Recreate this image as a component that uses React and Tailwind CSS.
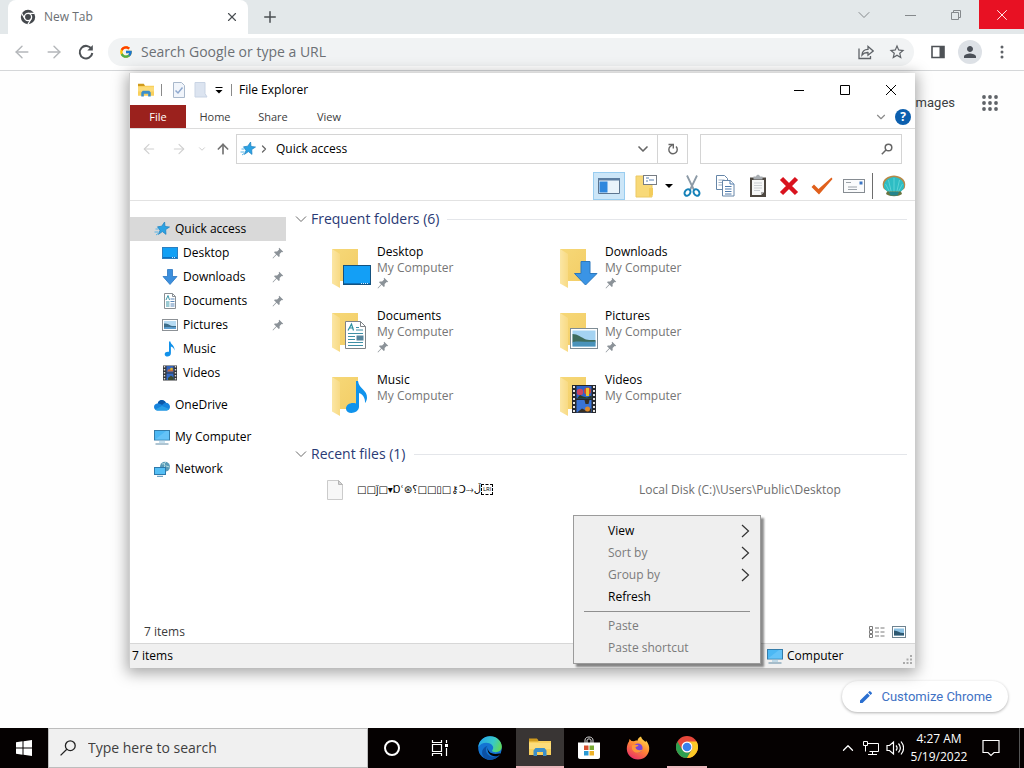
import { FcGoogle } from "react-icons/fc";
import { MdEdit, MdPerson, MdStarBorder } from "react-icons/md";
import { ChevronDown, ChevronRight, ChevronUp, ArrowLeft, ArrowRight, ArrowUp, Plus, X } from "lucide-react";

/* ---------- small icons ---------- */

function Pin({ className = "" }) {
  return (
    <svg viewBox="0 0 12 12" className={`size-3 ${className}`} fill="#8b9298">
      <path d="M7.2 0.8 11.2 4.8 10.3 5.3 9.6 4.9 7.6 6.9 7.7 9.2 6.8 10 4.6 7.8 1 11.4 0.6 11 4.1 7.3 2 5.2 2.8 4.4 5.1 4.5 7.1 2.5 6.7 1.6Z" />
    </svg>
  );
}

function QuickStar() {
  return (
    <svg viewBox="0 0 16 16" className="size-4 shrink-0">
      <path d="M10.6 1 11 5.400 15.500 6 11.700 8.600 12 13.400 8.400 10.600 4.400 13.400 6 9.400 3.500 5.800 7.700 5.200Z" fill="#2ba2e3" stroke="#1b7fc0" strokeWidth="0.7" />
      <path d="M1.500 8h3M0.500 11h4M2 14l2.500-1.800" stroke="#58b4e6" strokeWidth="1" />
    </svg>
  );
}

function DesktopIcon() {
  return (
    <svg viewBox="0 0 16 16" className="size-4 shrink-0">
      <rect x="0.5" y="2.5" width="15" height="11" fill="#12a0f5" stroke="#2d7fc0" />
      <path d="M1 12.5h14" stroke="#0b6fc0" />
      <path d="M10 12.5h4" stroke="#cfeaff" strokeDasharray="1 1" />
    </svg>
  );
}

function DownArrowIcon() {
  return (
    <svg viewBox="0 0 16 16" className="size-4 shrink-0">
      <path d="M5.5 0.5h5v7h4.5L8 15.5 1 7.5h4.5Z" fill="#3c8fdd" stroke="#2b76c0" strokeWidth="0.8" />
    </svg>
  );
}

function DocumentIcon() {
  return (
    <svg viewBox="0 0 16 16" className="size-4 shrink-0">
      <path d="M2.5 0.5h8l3 3v12h-11Z" fill="#fff" stroke="#8a8f94" />
      <path d="M10.500 0.5v3h3" fill="none" stroke="#8a8f94" />
      <path d="M4 7 6 2.500 7.500 7M4 9h3.500M4 11h3.500M4 13h3.500" stroke="#3b96a8" fill="none" />
      <path d="M8.500 6h4M8.500 8.500h4M8.500 11h4M8.500 13h4" stroke="#5b87b8" />
    </svg>
  );
}

function PictureIcon() {
  return (
    <svg viewBox="0 0 16 16" className="size-4 shrink-0">
      <rect x="0.5" y="2.5" width="15" height="11" fill="#fff" stroke="#8c9196" />
      <rect x="2" y="4" width="12" height="8" fill="#b6dbf3" />
      <path d="M2 6.500c3-.5 5 1 7 2.200 2 .6 3.500.3 5 .2V12H2Z" fill="#3d6e8b" />
      <path d="M2 10.500c4-1 8 0 12-.5V12H2Z" fill="#5e9fd0" />
    </svg>
  );
}

function MusicIcon() {
  return (
    <svg viewBox="0 0 16 16" className="size-4 shrink-0">
      <path d="M7 0.500h1.400c.3 3.200 4.600 4 4.100 9-.4-2.200-2-3.600-3.600-3.900v6.600c0 4.200-6.400 4.200-6.200.8.2-1.900 2.300-2.700 4.300-2.200Z" fill="#1191ea" />
    </svg>
  );
}

function VideoIcon() {
  return (
    <svg viewBox="0 0 16 16" className="size-4 shrink-0">
      <rect x="1" y="0.500" width="14" height="15" fill="#34373b" />
      <path d="M2.500 1v14M13.500 1v14" stroke="#dedede" strokeWidth="1.400" strokeDasharray="1.500 1.500" />
      <rect x="4.500" y="1" width="7" height="6.500" fill="#3264bd" />
      <rect x="4.500" y="8.500" width="7" height="6.500" fill="#356cc9" />
      <path d="M5 6.500 7 3.500 8 5l2-2.500 1.500 4Z" fill="#c76a37" />
      <path d="M6 13l3-2.500 2.500 2V15H6Z" fill="#3c4b2f" />
      <circle cx="9.500" cy="4" r="1.300" fill="#e1b62c" />
    </svg>
  );
}

function CloudIcon() {
  return (
    <svg viewBox="0 0 16 16" className="size-4 shrink-0">
      <path d="M3.700 6.500C4.500 2.500 9.800 1.700 11.900 5.800 14.300 5.800 16 7.500 16 9.800c0 2-1.400 3.600-3.200 3.600H3.200C1.300 13.400 0 11.800 0 10c0-2 1.600-3.500 3.700-3.500Z" fill="#1683dc" />
      <path d="M3.700 6.500C4.500 2.500 9.800 1.700 11.900 5.800 10.300 5.800 9 7 8 8 6.700 7 5.200 6.500 3.700 6.500Z" fill="#0b57a8" />
      <path d="M1 12.400 8 9l7.300 3c-.6.900-1.500 1.400-2.500 1.400H3.200c-.9 0-1.600-.400-2.200-1Z" fill="#289fe6" />
    </svg>
  );
}

function ComputerIcon() {
  return (
    <svg viewBox="0 0 16 16" className="size-4 shrink-0">
      <rect x="0.5" y="1.500" width="15" height="9.500" fill="#4cb8f4" stroke="#347ca9" />
      <path d="M1 10.500 12 2h3v8.500Z" fill="#64c3f8" />
      <path d="M5 13h6" stroke="#8fc1dd" />
      <path d="M1.500 15h13" stroke="#5e8aa5" />
    </svg>
  );
}

function NetworkIcon() {
  return (
    <svg viewBox="0 0 16 16" className="size-4 shrink-0">
      <circle cx="11" cy="5.800" r="5" fill="#5a9bb7" />
      <path d="M8 3c2 0 3-1 4-2M12 5l3.500 1M10 2l1 3-2 2" stroke="#b5dbe0" fill="none" />
      <rect x="0.5" y="6.500" width="11" height="7" fill="#55bff5" stroke="#2d79ab" />
      <path d="M3 15.300h6" stroke="#4d8db4" />
    </svg>
  );
}

function FolderApp({ className = "" }) {
  return (
    <svg viewBox="0 0 22 18" className={className}>
      <path d="M0 1h8l1.500 2H22v14H0Z" fill="#f9d05c" />
      <path d="M0 0.500h8l1.500 3H0Z" fill="#cf9a1d" />
      <path d="M0 5h22v6H0Z" fill="#fcdc7a" />
      <path d="M4.500 18v-5.500L6.500 10h9l2 2.500V18H14v-4H8v4Z" fill="#3b8fca" />
    </svg>
  );
}

/* Large folder with a badge for its kind in the lower right corner */
function BigFolder({ kind }) {
  return (
    <svg viewBox="0 0 40 44" className="h-11 w-10 shrink-0">
      <defs>
        <linearGradient id="folderBack" x1="0" y1="0" x2="1" y2="1">
          <stop offset="0" stopColor="#f6d878" />
          <stop offset="1" stopColor="#f3cd66" />
        </linearGradient>
        <linearGradient id="folderFlap" x1="0" y1="0" x2="1" y2="0">
          <stop offset="0" stopColor="#fbe6a4" />
          <stop offset="1" stopColor="#f8da84" />
        </linearGradient>
      </defs>
      <path d="M0 5h26v32H8Z" fill="url(#folderBack)" />
      <path d="M0 5 8 10v34L0 39.500Z" fill="url(#folderFlap)" />
      {kind === "Desktop" && (
        <g>
          <rect x="11.500" y="21.500" width="27" height="19" fill="#139ff6" stroke="#14527f" />
          <path d="M12 39.500h26" stroke="#0d6fb7" />
          <path d="M29 39.500h8" stroke="#d6efff" strokeDasharray="1 1" />
        </g>
      )}
      {kind === "Downloads" && (
        <path d="M21 17.500h9v12h7L25.500 41 14.500 29.500H21Z" fill="#3a94e5" stroke="#2c78bd" />
      )}
      {kind === "Documents" && (
        <g fill="none">
          <path d="M13.500 13.500h15l5 5v22h-20Z" fill="#fff" stroke="#7e8387" />
          <path d="M28.500 13.500v5h5" stroke="#7e8387" />
          <path d="M16 22.500 19.500 16l2 6.500M17.500 20h4" stroke="#2a8f9f" strokeWidth="1.200" />
          <path d="M24 19.500h3M24 22h7M16 25.500h15M16 28.500h7M16 31.500h7M16 34.500h15M16 37.500h15" stroke="#3f8fa5" />
          <path d="M24.500 27.500h7v5h-7Z" fill="#56859c" />
        </g>
      )}
      {kind === "Pictures" && (
        <g>
          <rect x="10.500" y="20.500" width="27" height="20" fill="#fff" stroke="#7e8c95" />
          <rect x="12.500" y="22.500" width="23" height="16" fill="#a4d3f2" />
          <path d="M12.500 26c5 0 9 3.500 13.500 5.500 4 .800 7 .500 9.500.5v2.500h-23Z" fill="#3e6c5c" />
          <path d="M12.500 34c8-1.500 15 .5 23-.5v5h-23Z" fill="#4a93bb" />
        </g>
      )}
      {kind === "Music" && (
        <path d="M24 9h2c1 8 9.500 9 9 17-.3 2.600-1 4-2 5 .5-5-2.500-9-6-10v14c-.5 7-12.500 8-13 2-.2-5 5.500-7 10-5.500Z" fill="#1093ec" />
      )}
      {kind === "Videos" && (
        <g>
          <rect x="12" y="13" width="24" height="28" fill="#26282c" />
          <path d="M14 14v26M34 14v26" stroke="#e4e4e4" strokeWidth="2" strokeDasharray="2 2" />
          <rect x="16.500" y="14" width="15" height="12.500" fill="#2d63ca" />
          <rect x="16.500" y="28" width="15" height="12.500" fill="#3a74d6" />
          <circle cx="20" cy="20" r="3.200" fill="#cc4662" />
          <circle cx="27.500" cy="19" r="3.500" fill="#d8452f" />
          <path d="M26 16h3v8h-3Z" fill="#eac22c" />
          <path d="M17 26.500 20 23l3 1.500 4 1 4.500-2v3Z" fill="#293d22" />
          <path d="M24.500 28h5l-1 4h-3ZM17 40.500l5-4 4 2 5-2v4Z" fill="#372f24" />
          <circle cx="27.500" cy="37" r="2.500" fill="#dd8a2b" />
        </g>
      )}
    </svg>
  );
}

/* ---------- browser ---------- */

function TabStrip() {
  return (
    <div className="flex h-[34px] bg-[#e3e8ea] text-[#4b4f53]">
      <div className="ml-2 flex w-60 items-center rounded-t-lg bg-white pr-[9px] pl-3">
        <svg viewBox="0 0 16 16" className="size-4">
          <circle cx="8" cy="8" r="7.200" fill="#44484d" />
          <circle cx="8" cy="8" r="3.600" fill="#44484d" stroke="#fff" strokeWidth="1.300" />
          <path d="M8 4.400h6.500M4.900 9.800 1.600 4.200M11.100 9.800 7.900 15.400" stroke="#fff" strokeWidth="1.200" />
        </svg>
        <span className="ml-2 flex-1 text-xs text-[#6b6f73]">New Tab</span>
        <button aria-label="Close tab">
          <X className="size-3.5" />
        </button>
      </div>
      <button aria-label="New tab" className="ml-[13px]">
        <Plus className="size-[18px]" />
      </button>
      <div className="flex-1" />
      <div className="flex h-[29px] items-center text-[#85898c]">
        <button aria-label="Search tabs" className="flex w-[46px] justify-center">
          <ChevronDown className="size-5" strokeWidth={1.2} />
        </button>
        <button aria-label="Minimize" className="flex w-[46px] justify-center">
          <svg viewBox="0 0 12 12" className="size-3" stroke="currentColor">
            <path d="M1 6.500h11" />
          </svg>
        </button>
        <button aria-label="Restore" className="flex w-[46px] justify-center">
          <svg viewBox="0 0 12 12" className="size-3" stroke="currentColor" fill="none">
            <path d="M1.500 3.500h7v7h-7ZM3.500 3.500v-2h7v7h-2" />
          </svg>
        </button>
        <button aria-label="Close" className="flex h-full w-[45px] items-center justify-center bg-[#e81123] text-white">
          <X className="size-[18px]" strokeWidth={1.2} />
        </button>
      </div>
    </div>
  );
}

function BrowserToolbar() {
  return (
    <div className="flex h-[37px] items-center border-b border-[#d5d7d9] bg-white pr-3.5 pl-3 text-[#5f6368]">
      <button aria-label="Back" className="text-[#b4b7ba]">
        <ArrowLeft className="size-5" strokeWidth={1.7} />
      </button>
      <button aria-label="Forward" className="ml-3 text-[#b4b7ba]">
        <ArrowRight className="size-5" strokeWidth={1.7} />
      </button>
      <button aria-label="Reload" className="ml-3">
        <svg viewBox="0 0 20 20" className="size-5" fill="none" stroke="#4e5256" strokeWidth="2">
          <path d="M15.600 7.200A6.300 6.300 0 1 0 16.300 11" />
          <path d="M16.800 3v5.500h-5.500Z" fill="#4e5256" stroke="none" />
        </svg>
      </button>
      <div className="ml-3 flex h-7 flex-1 items-center rounded-full bg-[#f1f3f4] pr-2 pl-[11px]">
        <FcGoogle className="size-3.5" />
        <input
          aria-label="Address and search bar"
          placeholder="Search Google or type a URL"
          className="ml-2 min-w-0 flex-1 bg-transparent text-sm outline-none placeholder:text-[#6c7074]"
        />
        <button aria-label="Share">
          <svg viewBox="0 0 16 16" className="size-4" fill="none" stroke="#5f6368" strokeWidth="1.300">
            <path d="M1 4.500v10h11.500v-2.500" />
            <path d="M4 11c.2-3.500 2.300-5.500 6-5.600V2.500L15.200 7 10 11.200V8.500C7.500 8.400 5.500 9 4 11Z" />
          </svg>
        </button>
        <button aria-label="Bookmark" className="ml-3.5">
          <MdStarBorder className="size-[18px]" />
        </button>
      </div>
      <button aria-label="Side panel" className="ml-4">
        <svg viewBox="0 0 16 16" className="size-4">
          <path d="M2 2.500h12v11H2Z" fill="none" stroke="#4e5256" strokeWidth="1.600" />
          <path d="M9.500 2H14v12H9.500Z" fill="#4e5256" />
        </svg>
      </button>
      <button aria-label="Profile" className="ml-3 flex size-6 items-center justify-center rounded-full bg-[#dde1e6]">
        <MdPerson className="size-[18px] text-[#4b5058]" />
      </button>
      <button aria-label="Menu" className="ml-3 flex w-4 justify-center">
        <svg viewBox="0 0 4 16" className="h-4 w-1" fill="#5f6368">
          <circle cx="2" cy="3" r="1.500" />
          <circle cx="2" cy="8" r="1.500" />
          <circle cx="2" cy="13" r="1.500" />
        </svg>
      </button>
    </div>
  );
}

function BrowserPage() {
  return (
    <main className="flex flex-1 flex-col items-end justify-between bg-[#fefefe] font-[Roboto,sans-serif]">
      <div className="flex h-16 items-center pr-[26px]">
        <a href="#images" className="text-[13px] text-[#3c3f43]">Images</a>
        <button aria-label="Google apps" className="ml-[27px]">
          <svg viewBox="0 0 16 16" className="size-4" fill="#5f6368">
            {[2, 8, 14].map((y) => [2, 8, 14].map((x) => <circle key={`${x}-${y}`} cx={x} cy={y} r="1.900" />))}
          </svg>
        </button>
      </div>
      <button className="mr-4 mb-4 flex h-[31px] items-center rounded-full bg-white px-4 text-[13px] text-[#3f72c4] shadow-[0_1px_3px_0_rgba(0,0,0,0.3)]">
        <MdEdit className="mr-[7px] size-4 text-[#2a6fd0]" />
        Customize Chrome
      </button>
    </main>
  );
}

/* ---------- file explorer ---------- */

const folders = [
  { name: "Desktop", pinned: true },
  { name: "Downloads", pinned: true },
  { name: "Documents", pinned: true },
  { name: "Pictures", pinned: true },
  { name: "Music", pinned: false },
  { name: "Videos", pinned: false },
];

const folderIcons = {
  Desktop: DesktopIcon,
  Downloads: DownArrowIcon,
  Documents: DocumentIcon,
  Pictures: PictureIcon,
  Music: MusicIcon,
  Videos: VideoIcon,
};

function TitleBar() {
  return (
    <div className="flex h-8 items-center pt-0.5 pr-px pl-2 text-xs text-black">
      <FolderApp className="h-3.5 w-4" />
      <span className="ml-[7px] h-3 w-px bg-[#8a8a8a]" />
      <button aria-label="Properties" className="ml-2.5">
        <svg viewBox="0 0 14 16" className="h-4 w-3.5" fill="#f1f5fb" stroke="#a9b8cb">
          <path d="M1.500 0.500h8l3 3v12h-11Z" />
          <path d="m3.500 8.500 2.500 2.500 4.500-5.500" stroke="#8fa9cf" strokeWidth="1.500" fill="none" />
        </svg>
      </button>
      <button aria-label="New folder" className="ml-2">
        <svg viewBox="0 0 14 16" className="h-4 w-3.5">
          <path d="M1 0.500h10v11l2 3.500H1Z" fill="#dce4f0" stroke="#c9d4e4" />
        </svg>
      </button>
      <button aria-label="Customize toolbar" className="ml-[7px]">
        <svg viewBox="0 0 8 8" className="size-2">
          <path d="M0.500 1.500h7" stroke="#000" />
          <path d="M0.500 4h7L4 7.500Z" />
        </svg>
      </button>
      <span className="ml-2 h-3 w-px bg-[#8a8a8a]" />
      <h1 className="ml-[7px] flex-1">File Explorer</h1>
      <button aria-label="Minimize" className="flex w-[46px] justify-center">
        <svg viewBox="0 0 12 12" className="size-3" stroke="#000">
          <path d="M1 6.500h10" />
        </svg>
      </button>
      <button aria-label="Maximize" className="flex w-[46px] justify-center">
        <svg viewBox="0 0 12 12" className="size-3" stroke="#000" fill="none">
          <path d="M1.500 1.500h9v9h-9Z" />
        </svg>
      </button>
      <button aria-label="Close" className="flex w-[46px] justify-center">
        <svg viewBox="0 0 12 12" className="size-3" stroke="#000">
          <path d="m1 1 10 10M11 1 1 11" />
        </svg>
      </button>
    </div>
  );
}

function RibbonTabs() {
  return (
    <div className="flex h-6 items-center border-b border-[#dcdcdc] text-[11px] text-[#3c3c3c]">
      <button className="h-full w-14 bg-[#9b211d] pt-px text-white">File</button>
      <button className="w-[58px] pt-px">Home</button>
      <button className="w-[58px] pt-px">Share</button>
      <button className="w-[54px] pt-px">View</button>
      <div className="flex-1" />
      <ChevronDown className="size-3.5 text-[#8b8b8b]" />
      <button aria-label="Help" className="mr-1 ml-[7px] flex size-4 items-center justify-center rounded-full bg-[#0c5fae] text-xs font-bold text-white">
        ?
      </button>
    </div>
  );
}

function AddressRow() {
  return (
    <div className="flex items-center pt-[5px] pr-[13px] pl-[11px] text-xs text-black">
      <button aria-label="Back" className="text-[#d0d0d0]">
        <ArrowLeft className="size-4" strokeWidth={1.7} />
      </button>
      <button aria-label="Forward" className="ml-3.5 text-[#d0d0d0]">
        <ArrowRight className="size-4" strokeWidth={1.7} />
      </button>
      <button aria-label="Recent locations" className="ml-2.5 text-[#c4c4c4]">
        <ChevronDown className="size-2.5" />
      </button>
      <button aria-label="Up" className="ml-2 text-[#737373]">
        <ArrowUp className="size-4" strokeWidth={2.5} />
      </button>
      <div className="ml-[5px] flex h-[30px] flex-1 items-center border border-[#d4d4d4] bg-white">
        <div className="flex flex-1 items-center pl-[3px]">
          <QuickStar />
          <ChevronRight className="ml-0.5 size-3 text-[#666]" strokeWidth={2.5} />
          <span className="ml-1.5">Quick access</span>
        </div>
        <button aria-label="Previous locations" className="flex w-7 justify-center">
          <ChevronDown className="size-4 text-[#666]" strokeWidth={2.5} />
        </button>
        <button aria-label="Refresh" className="flex h-full w-[30px] items-center justify-center border-l border-[#d4d4d4]">
          <svg viewBox="0 0 12 12" className="size-3" fill="none" stroke="#666" strokeWidth="1.400">
            <path d="M9 3.600A4.200 4.200 0 1 1 3.200 3.500L5.800 1.500" />
            <path d="M1.500 1.500h4.800v4" />
          </svg>
        </button>
      </div>
      <div className="ml-3 flex h-[30px] w-[202px] items-center border border-[#d4d4d4] bg-white pr-2">
        <input aria-label="Search Quick access" className="min-w-0 flex-1 bg-transparent px-2 outline-none" />
        <svg viewBox="0 0 12 12" className="size-3" fill="none" stroke="#666" strokeWidth="1.500">
          <circle cx="7.500" cy="4.500" r="3.300" />
          <path d="M5.200 6.800 0.800 11.200" />
        </svg>
      </div>
    </div>
  );
}

function CommandBar() {
  return (
    <div className="mt-1.5 flex h-[31px] items-center justify-end border-b border-[#e2e2e2] pt-px pr-2">
      <button aria-label="Navigation pane" className="flex h-7 w-8 items-center justify-center border border-[#99cdf0] bg-[#cce6f8]">
        <svg viewBox="0 0 22 18" className="h-[18px] w-[22px]">
          <path d="M0.500 1.500h21v15h-21Z" fill="#e9f3fb" stroke="#5c7590" />
          <path d="M0 1h22v2.500H0Z" fill="#5c7da0" />
          <path d="M1.500 4.500h8v11h-8Z" fill="#2f87dd" />
        </svg>
      </button>
      <button aria-label="New item" className="ml-2.5">
        <svg viewBox="0 0 22 24" className="h-6 w-[22px]">
          <path d="M1 2h12l4 4v17H1Z" fill="#f8d978" stroke="#ecc964" />
          <path d="M14 14h4v7l-4 2Z" fill="#f3cc5b" />
          <rect x="8.500" y="1.500" width="13" height="9" fill="#fff" stroke="#777d84" />
          <path d="M11 7h2M14 6h5M11 4h3" stroke="#5980b0" />
        </svg>
      </button>
      <button aria-label="New item options" className="ml-2">
        <svg viewBox="0 0 8 4" className="h-1 w-2">
          <path d="M0 0h8L4 4Z" />
        </svg>
      </button>
      <button aria-label="Cut" className="ml-2.5">
        <svg viewBox="0 0 18 24" className="h-6 w-[18px]" fill="none">
          <path d="M4 1.500 11 16M14 1.500 7 16" stroke="#8c9aa6" strokeWidth="1.800" />
          <ellipse cx="4.500" cy="18.500" rx="2.700" ry="3.500" transform="rotate(35 4.500 18.500)" stroke="#1581b8" strokeWidth="2" />
          <ellipse cx="13.500" cy="18.500" rx="2.700" ry="3.500" transform="rotate(-35 13.500 18.500)" stroke="#1581b8" strokeWidth="2" />
        </svg>
      </button>
      <button aria-label="Copy" className="ml-3.5">
        <svg viewBox="0 0 20 24" className="h-6 w-5" stroke="#6686a8" fill="#fff">
          <path d="M1.500 1.500h8l3 3v11h-11Z" />
          <path d="M3.500 6h6M3.500 8.500h6M3.500 11h6" stroke="#9eb2c7" />
          <path d="M7.500 6.500h8l3.500 3.500v12H7.500Z" />
          <path d="M15 6.500V10h4M10 12.500h6.500M10 15h6.500M10 17.500h6.500M10 20h6.500" stroke="#4f7bac" />
        </svg>
      </button>
      <button aria-label="Paste" className="ml-3.5">
        <svg viewBox="0 0 18 24" className="h-6 w-[18px]">
          <path d="M1 3.500h16V23H1Z" fill="#4d4740" />
          <path d="M3 6h12v12l-3 3H3Z" fill="#f6f7f7" />
          <path d="M12 21v-3h3Z" fill="#aaa" />
          <path d="M4.500 2.500H7C7.500 0 10.500 0 11 2.500h2.500v3h-9Z" fill="#a8adb2" />
          <path d="M5 9h8M5 11.500h8M5 14h8M5 16.500h6" stroke="#c9cdd1" />
        </svg>
      </button>
      <button aria-label="Delete" className="ml-3">
        <svg viewBox="0 0 20 20" className="size-5" stroke="#d9131e" strokeWidth="4.500">
          <path d="m2.500 2.500 15 15M17.500 2.500l-15 15" />
        </svg>
      </button>
      <button aria-label="Rename" className="ml-3">
        <svg viewBox="0 0 22 20" className="h-5 w-[22px]">
          <path d="M0.500 11 3 8.500l4.500 4.500L20.500 1.500 21.500 3 8 18.500Z" fill="#e0601c" />
        </svg>
      </button>
      <button aria-label="Properties" className="ml-2.5">
        <svg viewBox="0 0 22 14" className="h-3.5 w-[22px]">
          <rect x="0.500" y="0.500" width="21" height="13" fill="#fafbfc" stroke="#868c92" />
          <path d="M3 3.500h5M5 8h9M5 10.500h9" stroke="#9ba2a9" />
          <path d="M16.500 2.500h3v3h-3Z" fill="#3b75c4" />
        </svg>
      </button>
      <span className="ml-[7px] h-[26px] w-px bg-[#6d6d6d]" />
      <button aria-label="Classic shell" className="ml-2">
        <svg viewBox="0 0 26 24" className="h-6 w-[26px]">
          <path d="M2 13C0 5 8 1.500 13 1.500S26 5 24 13c-.5 3-4 3-5 5H7c-1-2-4.500-2-5-5Z" fill="#b58a4a" />
          <path d="M3 13C2 6.500 9 3 13 3s11 3.500 10 10c-.5 3-3 4-4 5.500H7.500C6.500 17 3.500 16 3 13Z" fill="#2ebdc4" />
          <path d="M13 19V4M10.500 19 7.500 6M15.500 19l3-13M9 18.500 4.500 10M17 18.500 21.500 10" stroke="#5dd3d5" fill="none" />
          <path d="M6 17.500h14l1 2.500c-4 3-12 3-16 0Z" fill="#6b7440" />
          <path d="M8 18h10l-1.500 3.500h-7Z" fill="#24858d" />
        </svg>
      </button>
    </div>
  );
}

function SidebarItem({ icon: Icon, label, pinned, nested, active }) {
  return (
    <li>
      <a
        href={`#${label}`}
        className={`flex h-6 items-center pr-0.5 ${nested ? "pl-8" : "pl-6"} ${active ? "bg-[#d9d9d9]" : ""}`}
      >
        <Icon />
        <span className="ml-[5px] flex-1">{label}</span>
        {pinned && <Pin />}
      </a>
    </li>
  );
}

function Sidebar() {
  return (
    <nav className="w-[156px] shrink-0 pt-4 text-xs text-black">
      <ul>
        <SidebarItem icon={QuickStar} label="Quick access" active />
        {folders.map((f) => (
          <SidebarItem key={f.name} icon={folderIcons[f.name]} label={f.name} pinned={f.pinned} nested />
        ))}
      </ul>
      <ul className="mt-2 flex flex-col gap-2">
        <SidebarItem icon={CloudIcon} label="OneDrive" />
        <SidebarItem icon={ComputerIcon} label="My Computer" />
        <SidebarItem icon={NetworkIcon} label="Network" />
      </ul>
    </nav>
  );
}

function GroupHeader({ children }) {
  return (
    <div className="flex h-6 items-center gap-1 text-[#2a3a75]">
      <svg viewBox="0 0 12 8" className="h-2 w-3" fill="none" stroke="#6a6a6a">
        <path d="M1 1.500 6 6.500l5-5" />
      </svg>
      <h2 className="text-sm">{children}</h2>
      <span className="ml-1 h-px flex-1 bg-[#e4e6ea]" />
    </div>
  );
}

function Content() {
  return (
    <section className="min-w-0 flex-1 pt-1.5 pr-2 pl-[9px] text-xs">
      <GroupHeader>Frequent folders (6)</GroupHeader>
      <ul className="mt-[13px] grid grid-cols-[228px_228px] pl-[37px]">
        {folders.map((f) => (
          <li key={f.name} className="flex h-16 gap-[5px]">
            <BigFolder kind={f.name} />
            <div className="leading-4">
              <p className="text-black">{f.name}</p>
              <p className="text-[#767676]">My Computer</p>
              {f.pinned && <Pin className="mt-px" />}
            </div>
          </li>
        ))}
      </ul>
      <div className="mt-1.5">
        <GroupHeader>Recent files (1)</GroupHeader>
      </div>
      <div className="mt-3 flex h-6 items-center pl-8">
        <svg viewBox="0 0 16 20" className="h-[22px] w-4 shrink-0">
          <path d="M0.500 0.500h11l4 4v15h-15Z" fill="#f7f7f7" stroke="#cbcbcb" />
          <path d="M11.500 0.500v4h4Z" fill="#d5d5d5" stroke="#b5b5b5" />
        </svg>
        <span className="ml-3.5 flex w-[282px] items-center text-[10px] text-black">
          □□ǰ□▾Ɒՙ⊛⸮□□▯□⚷Ↄ⤑ڵ
          <span className="border border-dashed border-black px-px text-[6px] leading-[9px]">LRI</span>
        </span>
        <span className="text-[#6e6e6e]">Local Disk (C:)\Users\Public\Desktop</span>
      </div>
    </section>
  );
}

function StatusBars() {
  return (
    <footer className="text-xs">
      <div className="flex h-6 items-center pt-px pr-[9px] pl-3.5 text-[#3b3b3b]">
        <span className="flex-1">7 items</span>
        <button aria-label="Details view">
          <svg viewBox="0 0 16 14" className="h-3.5 w-4" fill="none" stroke="#7b7b7b">
            <path d="M0.500 1.500h3v3h-3ZM0.500 5.500h3v3h-3ZM0.500 9.500h3v3h-3Z" />
            <path d="M6 3h10M6 7h10M6 11h10" strokeDasharray="4 1.500" />
          </svg>
        </button>
        <button aria-label="Large icons view" className="ml-[7px]">
          <svg viewBox="0 0 14 12" className="h-3 w-3.5">
            <rect x="0.500" y="0.500" width="13" height="11" fill="#fff" stroke="#6f8390" />
            <rect x="2" y="2.500" width="10" height="7" fill="#8cc2e4" />
            <path d="M2 4.500c4 0 6 3 10 2.500v2.500H2Z" fill="#2e5870" />
          </svg>
        </button>
      </div>
      <div className="flex h-[25px] items-center border-t border-[#d7d7d7] bg-[#f0f0f0] pl-0.5 text-black">
        <span className="flex-1">7 items</span>
        <ComputerIcon />
        <span className="ml-1 w-[116px]">Computer</span>
        <svg viewBox="0 0 10 10" className="mt-2 mr-0.5 size-2.5" fill="#aaa">
          <path d="M7 0h2v2H7ZM7 3.500h2v2H7ZM3.500 3.500h2v2h-2ZM7 7h2v2H7ZM3.500 7h2v2h-2ZM0 7h2v2H0Z" />
        </svg>
      </div>
    </footer>
  );
}

function MenuItem({ label, disabled, submenu }) {
  return (
    <button
      role="menuitem"
      disabled={disabled}
      className={`flex h-[22px] w-full items-center justify-between pr-1.5 pl-[34px] ${disabled ? "text-[#7b7b7b]" : "text-black"}`}
    >
      {label}
      {submenu && (
        <svg viewBox="0 0 16 16" className="size-4" fill="none" stroke="#333" strokeWidth="1.200">
          <path d="m4 2 6.500 6L4 14" />
        </svg>
      )}
    </button>
  );
}

function ContextMenu() {
  return (
    <div
      role="menu"
      className="absolute top-[442px] left-[443px] w-[188px] border border-[#9b9b9b] bg-[#efefef] py-1 text-xs shadow-[3px_3px_2px_rgba(0,0,0,0.45)]"
    >
      <MenuItem label="View" submenu />
      <MenuItem label="Sort by" disabled submenu />
      <MenuItem label="Group by" disabled submenu />
      <MenuItem label="Refresh" />
      <hr className="mx-2.5 my-[3px] border-[#8f8f8f]" />
      <MenuItem label="Paste" disabled />
      <MenuItem label="Paste shortcut" disabled />
    </div>
  );
}

function FileExplorer() {
  return (
    <div className="absolute top-[73px] right-[109px] bottom-[100px] left-[129px] flex flex-col border-l border-[#cfcfcf] bg-white shadow-[0_3px_14px_2px_rgba(0,0,0,0.35)]">
      <TitleBar />
      <RibbonTabs />
      <AddressRow />
      <CommandBar />
      <div className="flex min-h-0 flex-1">
        <Sidebar />
        <Content />
      </div>
      <StatusBars />
      <ContextMenu />
    </div>
  );
}

/* ---------- taskbar ---------- */

function Taskbar() {
  return (
    <div className="flex h-10 shrink-0 items-stretch bg-[#050101] text-white">
      <button aria-label="Start" className="flex w-12 items-center justify-center">
        <svg viewBox="0 0 16 16" className="size-4" fill="#fff">
          <path d="M0 2.200 6.500 1.300v6.200H0ZM7.500 1.200 16 0v7.500H7.500ZM0 8.500h6.500v6.200L0 13.800ZM7.500 8.500H16V16l-8.500-1.200Z" />
        </svg>
      </button>
      <div className="flex w-80 items-center border border-[#bdbdbd] bg-[#f0f0f0] pl-[11px] text-[#3b3b3b]">
        <svg viewBox="0 0 16 16" className="size-4" fill="none" stroke="#222" strokeWidth="1.300">
          <circle cx="10.300" cy="5.700" r="4.900" />
          <path d="M6.800 9.200 0.600 15.400" />
        </svg>
        <input
          aria-label="Search"
          placeholder="Type here to search"
          className="ml-3 min-w-0 flex-1 bg-transparent text-sm outline-none placeholder:text-[#3f3f3f]"
        />
      </div>
      <button aria-label="Cortana" className="flex w-12 items-center justify-center">
        <span className="size-4 rounded-full border-2 border-white" />
      </button>
      <button aria-label="Task view" className="flex w-12 items-center justify-center">
        <svg viewBox="0 0 18 16" className="h-4 w-[18px]" fill="none" stroke="#fff" strokeWidth="1.200">
          <path d="M1.500 4.500h9v7h-9ZM1.500 0v2.500h9V0M1.500 16v-2.500h9V16M15.500 0v3M15.500 8v8" />
          <path d="M14 4h3v3h-3Z" fill="#fff" stroke="none" />
        </svg>
      </button>
      <button aria-label="Microsoft Edge" className="flex w-[52px] items-center justify-center">
        <svg viewBox="0 0 24 24" className="size-6">
          <defs>
            <linearGradient id="edgeTop" x1="0" y1="0.300" x2="1" y2="0.600">
              <stop offset="0" stopColor="#27a6e8" />
              <stop offset="0.600" stopColor="#38c9c8" />
              <stop offset="1" stopColor="#62d957" />
            </linearGradient>
          </defs>
          <circle cx="12" cy="12" r="11.800" fill="#1474d2" />
          <path d="M0.300 11C1 4.500 6 .2 12 .2c7 0 11.800 5 11.800 10.300 0 3.600-2.800 5.700-6 5.700-2.500 0-4-.8-3.700-1.700 1.200-1.600 1.400-3 .6-4.500C12 5.500 3.500 5.500.3 11Z" fill="url(#edgeTop)" />
          <path d="M9.500 9.700C6 13.500 8.500 20.500 15 20.700c3 0 5-.9 7-2.200-3 5-9.500 6.500-14.200 4.500C3 20 2 12.500 9.500 9.700Z" fill="#0c51a5" />
          <path d="M10 11c-1 4 3 8.500 11.500 6.500 1.300-.400 1 .5.400 1.200-6 4-14-.5-11.900-7.700Z" fill="#050101" />
        </svg>
      </button>
      <button aria-label="File Explorer" className="flex w-12 items-center justify-center border-b-2 border-[#e9b6bb] bg-[#393534]">
        <FolderApp className="h-[18px] w-[22px]" />
      </button>
      <button aria-label="Microsoft Store" className="flex w-[50px] items-center justify-center">
        <svg viewBox="0 0 24 24" className="size-6">
          <path d="M8 7V4c0-4 8-4 8 0v3M10 7V4c0-1.500 4-1.500 4 0v3" fill="none" stroke="#ddd" />
          <path d="M1 6.500h22V21c0 1-.8 2-2 2H3c-1.200 0-2-1-2-2Z" fill="#fff" />
          <path d="M7 9.500h4.500V14H7Z" fill="#d7502f" />
          <path d="M12.500 9.500H17V14h-4.500Z" fill="#7aaa33" />
          <path d="M7 15h4.500v4.500H7Z" fill="#2a99d4" />
          <path d="M12.500 15H17v4.500h-4.500Z" fill="#eeb228" />
        </svg>
      </button>
      <button aria-label="Firefox" className="flex w-12 items-center justify-center">
        <svg viewBox="0 0 24 24" className="size-6">
          <defs>
            <linearGradient id="foxBody" x1="0.800" y1="0" x2="0.200" y2="1">
              <stop offset="0" stopColor="#ffe14d" />
              <stop offset="0.450" stopColor="#ff8a33" />
              <stop offset="1" stopColor="#e8286b" />
            </linearGradient>
          </defs>
          <path d="M15 0.500c.5 2.500 3 4 4.500 5.500l.5-1.500c2.500 3 3.500 6 3.200 9C22.500 19.500 18 23.500 12 23.500S1 19 .8 13c0-3 .7-5.500 2.200-7.500l.5-2.500 2 2 2.500.2c1.500-1 2.500-.8 3.500-.5C11.500 3 13 1.500 15 .5Z" fill="url(#foxBody)" />
          <circle cx="12" cy="12" r="4.600" fill="#7a45d6" />
          <path d="M6 9.500c2-1.500 5-.5 6.500-.5-.500 1.500-2 1.700-3 2.200.300 3 4.200 3.600 7 2.300-1.500 4-8.800 4.500-10.500-.5Z" fill="#ff9738" />
        </svg>
      </button>
      <button aria-label="Google Chrome" className="mx-[5px] flex w-10 items-center justify-center border-b-2 border-[#e9b6bb]">
        <svg viewBox="0 0 24 24" className="size-[22px]">
          <circle cx="12" cy="12" r="12" fill="#e6473a" />
          <path d="M1.600 6A12 12 0 0 0 12 24l5.200-9A6 6 0 0 1 6.800 15Z" fill="#2c9f4f" />
          <path d="M12 24A12 12 0 0 0 22.400 6H12a6 6 0 0 1 5.200 9Z" fill="#fbc926" />
          <circle cx="12" cy="12" r="6" fill="#fff" />
          <circle cx="12" cy="12" r="4.700" fill="#3a80ec" />
        </svg>
      </button>
      <div className="flex-1" />
      <div className="flex items-center text-xs">
        <button aria-label="Show hidden icons">
          <ChevronUp className="size-[18px]" strokeWidth={1.7} />
        </button>
        <svg viewBox="0 0 16 16" className="ml-1.5 size-4" fill="none" stroke="#fff">
          <path d="M4.500 3.500h11v8h-9M9.500 11.500v3M5 14.500h9" />
          <path d="M0.500 1.500h4v4h-4ZM2.500 5.500v6" />
        </svg>
        <svg viewBox="0 0 18 16" className="ml-[7px] h-4 w-[18px]" fill="none" stroke="#fff" strokeWidth="1.200">
          <path d="M1 5.500h2.500L7.500 2v12L3.500 10.500H1ZM10 5.500c1.300 1.500 1.300 3.500 0 5M12.500 3.500c2.300 2.800 2.300 6.200 0 9M15 1.500c3.200 4 3.200 9 0 13" />
        </svg>
        <div className="ml-2 flex w-[54px] flex-col items-center leading-[18px] whitespace-nowrap">
          <p>4:27 AM</p>
          <p>5/19/2022</p>
        </div>
        <button aria-label="Notifications" className="ml-4">
          <svg viewBox="0 0 18 18" className="size-[18px]" fill="none" stroke="#fff" strokeWidth="1.200">
            <path d="M1 1.500h16v12h-5L9 16.500 6 13.500H1Z" />
          </svg>
        </button>
        <span className="ml-[19px] h-10 w-[5px] border-l border-[#555]" />
      </div>
    </div>
  );
}

export default function App() {
  return (
    <div className="relative flex h-screen flex-col overflow-hidden font-['Open_Sans','DejaVu_Sans',sans-serif]">
      <TabStrip />
      <BrowserToolbar />
      <BrowserPage />
      <FileExplorer />
      <Taskbar />
    </div>
  );
}
